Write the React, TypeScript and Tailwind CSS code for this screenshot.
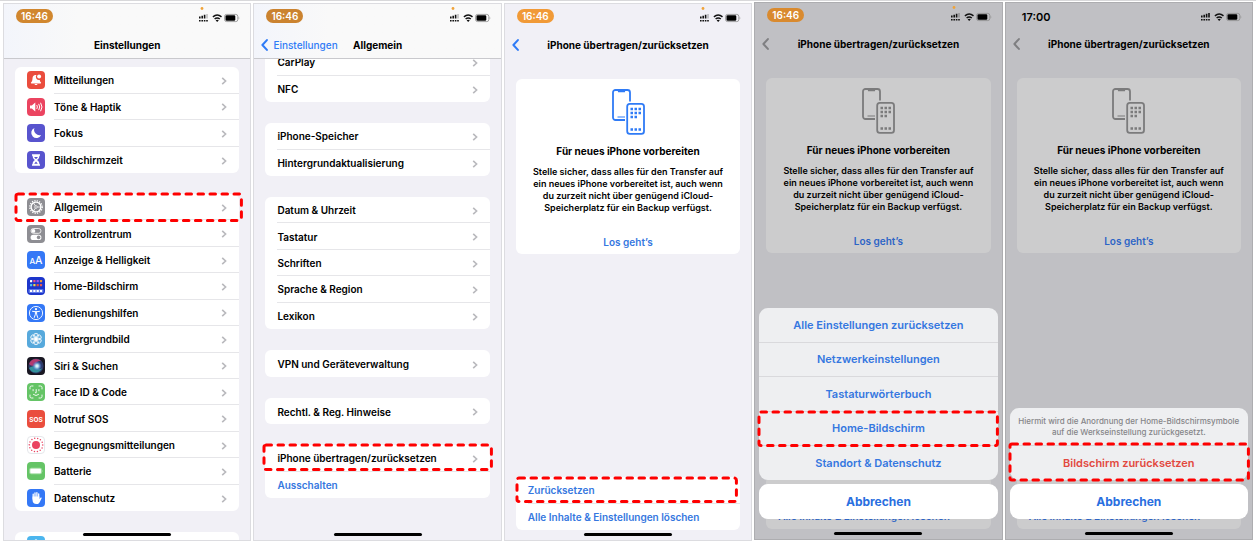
import type { FC, ReactNode } from "react";
import clsx from "clsx";

const Tile: FC<{ className: string; children?: ReactNode }> = ({
  className,
  children,
}) => (
  <svg
    viewBox="0 0 18 18"
    aria-hidden="true"
    className={clsx("size-[18px] shrink-0 rounded-[4px]", className)}
  >
    {children}
  </svg>
);

const BellIcon = () => (
  <Tile className="bg-[#ea4d3d]">
    <path
      fill="#fff"
      d="M8.6 4c-2 .1-3 1.600-3.100 3.400-.1 2-.5 3-1.500 4.200-.3.4 0 .8.4.8h9.200c.4 0 .7-.4.4-.8-.7-.8-1.100-1.500-1.300-2.600a3.200 3.200 0 0 1-3.300-4.900zM7.500 13.100h3c-.2 1.300-2.800 1.300-3 0z"
    />
    <circle cx="12.100" cy="5.600" r="2" fill="#fff" />
  </Tile>
);

const SoundIcon = () => (
  <Tile className="bg-[#eb4460]">
    <path fill="#fff" d="M3 7.400h1.800L8.300 4.600v8.800L4.800 10.600H3z" />
    <path
      stroke="#fff"
      fill="none"
      strokeLinecap="round"
      d="M10 7.400q1 1.600 0 3.200M11.900 6.200q1.900 2.800 0 5.600M13.800 5.100q2.600 3.900 0 7.800"
    />
  </Tile>
);

const MoonIcon = () => (
  <Tile className="bg-[#5854ce]">
    <path
      fill="#fff"
      d="M7.400 4a5.200 5.200 0 1 0 6.800 6.900A5.400 5.400 0 0 1 7.400 4z"
    />
  </Tile>
);

const HourglassIcon = () => (
  <Tile className="bg-[#5854ce]">
    <path
      fill="#fff"
      d="M5 3.200h8v1.600h-.6c0 2-.8 3.200-2.400 4.200 1.600 1 2.400 2.200 2.400 4.200h.6v1.600H5v-1.600h.6c0-2 .8-3.200 2.400-4.200-1.600-1-2.400-2.200-2.400-4.200H5z"
    />
    <path fill="#5854ce" d="M7 6h4L9 8.300zM9 10.500l1.800 2.300H7.200z" />
  </Tile>
);

const GearIcon = () => (
  <Tile className="bg-[#8e8e93]">
    <circle
      cx="9"
      cy="9"
      r="6.200"
      fill="none"
      stroke="#fff"
      strokeWidth="1.400"
      strokeDasharray="1.200 1.235"
    />
    <circle cx="9" cy="9" r="4.900" fill="none" stroke="#fff" strokeWidth="1.400" />
    <circle cx="9" cy="9" r="1.300" fill="none" stroke="#fff" strokeWidth=".7" />
    <path
      stroke="#fff"
      strokeWidth=".8"
      d="M10.400 9h3.400M8.300 7.800 6.500 4.800M8.300 10.200l-1.800 3"
    />
  </Tile>
);

const SwitchesIcon = () => (
  <Tile className="bg-[#8e8e93]">
    <rect
      x="4"
      y="3.500"
      width="10"
      height="4.800"
      rx="2.400"
      fill="none"
      stroke="#fff"
      strokeWidth=".8"
    />
    <circle cx="6.400" cy="5.900" r="1.900" fill="#fff" />
    <rect x="3.600" y="9.700" width="10.800" height="5.400" rx="2.700" fill="#fff" />
    <circle cx="11.600" cy="12.400" r="1.800" fill="#8e8e93" />
  </Tile>
);

const TextSizeIcon = () => (
  <Tile className="bg-[#3478f6]">
    <text x="2.500" y="12.800" fontSize="8" fontWeight="500" fill="#fff">
      A
    </text>
    <text x="8" y="12.800" fontSize="10.500" fontWeight="500" fill="#fff">
      A
    </text>
  </Tile>
);

const appColors = [
  ["#fff", "#ee4f86", "#a456e8", "#f19a37"],
  ["#4fc3f7", "#f5d33f", "#ea4d3d", "#ee5f50"],
];

const HomeScreenIcon = () => (
  <Tile className="bg-[#1d36cb]">
    {appColors.map((row, y) =>
      row.map((color, x) => (
        <rect
          key={`${x}-${y}`}
          x={3 + x * 3.300}
          y={3 + y * 4}
          width="2.200"
          height="2.200"
          rx=".5"
          fill={color}
        />
      ))
    )}
    <rect x="1.500" y="12" width="15" height="4" rx="1" fill="#5f79e8" />
    <path
      stroke="#fff"
      strokeWidth="2.200"
      strokeDasharray="2.200 1.100"
      d="M3 14h12.100"
    />
  </Tile>
);

const AccessibilityIcon = () => (
  <Tile className="bg-[#3478f6]">
    <circle cx="9" cy="9" r="6.600" fill="none" stroke="#fff" strokeWidth=".9" />
    <circle cx="9" cy="5.200" r="1.100" fill="#fff" />
    <path
      stroke="#fff"
      fill="none"
      strokeLinecap="round"
      strokeLinejoin="round"
      d="M5.500 7.300 9 7.800l3.500-.5M8.400 7.800v2.400l-1.100 3.300M9.600 7.800v2.400l1.100 3.300"
    />
  </Tile>
);

const FlowerIcon = () => (
  <Tile className="bg-[#57a9dc]">
    {[0, 60, 120, 180, 240, 300].map((angle) => (
      <circle
        key={angle}
        cx="9"
        cy="5.600"
        r="2.300"
        fill="#fff"
        fillOpacity=".15"
        stroke="#fff"
        strokeWidth=".8"
        transform={`rotate(${angle} 9 9)`}
      />
    ))}
    <circle cx="9" cy="9" r="1.500" fill="#fff" />
  </Tile>
);

const SiriIcon = () => (
  <Tile className="bg-[#191722]">
    <defs>
      <radialGradient id="siri">
        <stop offset="0" stopColor="#fff" />
        <stop offset=".4" stopColor="#9fd0e8" />
        <stop offset="1" stopColor="#3a63c8" stopOpacity=".3" />
      </radialGradient>
    </defs>
    <circle cx="9" cy="9" r="7.600" fill="#2e3b69" />
    <path fill="#d63b71" fillOpacity=".8" d="M2 7c2-6 9-6 12-3-4 0-6 2-5 5-3 0-5 0-7-2z" />
    <path fill="#36b9b0" fillOpacity=".7" d="M2 11c3-2 6-2 7-1 3 2 5 3 6 1-1 5-10 7-13 0z" />
    <circle cx="10" cy="9" r="4.500" fill="url(#siri)" />
  </Tile>
);

const FaceIcon = () => (
  <Tile className="bg-[#65c466]">
    <path
      stroke="#fff"
      strokeWidth=".9"
      fill="none"
      strokeLinecap="round"
      d="M3 6V4.500A1.500 1.500 0 0 1 4.500 3H6M12 3h1.500A1.500 1.500 0 0 1 15 4.500V6M15 12v1.500a1.500 1.500 0 0 1-1.500 1.500H12M6 15H4.500A1.500 1.500 0 0 1 3 13.500V12M6.100 6.500v1.300M11.900 6.500v1.300M9.200 6.500v3.200h-.8M6.400 11.500q2.600 2.300 5.200 0"
    />
  </Tile>
);

const SosIcon = () => (
  <Tile className="bg-[#ea4d3d]">
    <text
      x="9"
      y="11.500"
      fontSize="6.500"
      fontWeight="700"
      textAnchor="middle"
      fill="#fff"
    >
      SOS
    </text>
  </Tile>
);

const ExposureIcon = () => (
  <Tile className="border border-gray-200 bg-white">
    <circle cx="9" cy="9" r="4.500" fill="#ea4461" />
    <circle
      cx="9"
      cy="9"
      r="7.600"
      fill="none"
      stroke="#ea4461"
      strokeWidth="1.700"
      strokeLinecap="round"
      strokeDasharray="0 3.411"
    />
  </Tile>
);

const BatteryTileIcon = () => (
  <Tile className="bg-[#65c466]">
    <rect
      x="2.300"
      y="5.700"
      width="12.600"
      height="6.600"
      rx="1.800"
      fill="#a8dfa9"
    />
    <rect x="3.300" y="6.700" width="10.600" height="4.600" rx="1" fill="#fff" />
    <path fill="#a8dfa9" d="M15.400 7.800q1.200 1.200 0 2.400z" />
  </Tile>
);

const HandIcon = () => (
  <Tile className="bg-[#3478f6]">
    <path
      stroke="#fff"
      strokeWidth="1.300"
      strokeLinecap="round"
      d="M6.200 10V5.200M8 9V3.800M9.900 9V3.600M11.700 10V4.900"
    />
    <path
      fill="#fff"
      d="M5.550 7.500h6.800v2.700l1.300-1.600c.5-.5 1.300 0 1 .7l-2 3.900c-.6 1.200-1.700 1.900-3.200 1.900-2.500 0-3.900-1.500-3.900-4z"
    />
  </Tile>
);

const StoreIcon = () => (
  <Tile className="bg-[#4bb5ee]">
    <path stroke="#fff" strokeWidth="1.400" d="M9.800 3.600 5 12M8.200 3.600 13 12" />
  </Tile>
);

const Chevron = () => (
  <svg
    viewBox="0 0 6 8"
    aria-hidden="true"
    className="mr-3 ml-auto h-2 w-1.5 shrink-0"
  >
    <path
      d="M1.200.8 4.600 4 1.200 7.200"
      fill="none"
      stroke="#b9b9bd"
      strokeWidth="1.600"
    />
  </svg>
);

/* red dashed marker drawn around the step to tap */
const Marker: FC<{ className: string }> = ({ className }) => (
  <span className={clsx("pointer-events-none absolute z-10", className)}>
    <svg aria-hidden="true" className="block size-full overflow-visible">
      <rect
        width="100%"
        height="100%"
        rx="2"
        fill="none"
        stroke="#fe0000"
        strokeWidth="3"
        strokeLinecap="round"
        strokeDasharray="5.500 6.500"
      />
    </svg>
  </span>
);

const StatusIcons: FC<{ dot: boolean }> = ({ dot }) => (
  <svg viewBox="0 0 42 18" aria-hidden="true" className="h-[18px] w-[42px]">
    {dot && <circle cx="4" cy="2.500" r="1.400" fill="#f0a33a" />}
    <path
      fill="#111"
      d="M1 12.500h1.600v-1.900H1zM3.400 12.500H5V9.800H3.400zM5.800 12.500h1.600V8.800H5.800zM1 15.600h1.600v-1.700H1zM3.400 15.600H5v-1.700H3.400zM5.800 15.600h1.600v-1.700H5.800zM8.200 15.600h1.600v-1.700H8.200z"
    />
    <path
      fill="#111"
      fillOpacity={dot ? ".25" : "1"}
      d="M8.200 12.500h1.600V8H8.200z"
    />
    <path
      fill="none"
      stroke="#111"
      strokeWidth="1.500"
      d="M14.900 10.800q4.300-3.600 8.600 0M16.600 13q2.600-2.100 5.200 0"
    />
    <path fill="#111" d="M17.600 14.300q1.600-1.200 3.200 0L19.200 16z" />
    <rect
      x="26.600"
      y="8.400"
      width="13.200"
      height="7.200"
      rx="2"
      fill="none"
      stroke="#8a8a8a"
      strokeWidth=".8"
    />
    <rect x="27.500" y="9.300" width="9.800" height="5.400" rx="1.200" fill="#000" />
    <path fill="#8a8a8a" d="M40.700 10.600q1.300 1.400 0 2.800z" />
  </svg>
);

interface PhoneProps {
  time?: string;
  pill?: string;
  title: string;
  back?: string;
  dim?: boolean;
  bar?: boolean;
  children: ReactNode;
}

const Phone: FC<PhoneProps> = ({
  time = "16:46",
  pill,
  title,
  back,
  dim,
  bar,
  children,
}) => (
  <section
    className={clsx(
      "relative flex min-w-0 flex-1 flex-col overflow-hidden border",
      dim
        ? "mb-px border-[#adadb0] bg-[#c0c0c4]"
        : "mt-px border-[#dcdce0] bg-[#f1f0f6]"
    )}
  >
    <header
      className={clsx(
        "relative z-10 shrink-0 border-b",
        bar
          ? "border-[#c9c9cd] bg-linear-to-r from-[#f3f5fb] to-[#f9f9f9] to-30%"
          : "border-transparent"
      )}
    >
      <div className="flex h-[27px] items-start justify-between pr-2.5 pl-3">
        <span
          className={clsx(
            "flex w-[37px] items-center justify-center",
            pill
              ? clsx(
                  pill,
                  "mt-[5px] h-[14px] rounded-full text-[10px] font-semibold text-white"
                )
              : "mt-[7px] h-[14px] text-[11px] font-semibold text-black"
          )}
        >
          {time}
        </span>
        <span className="mt-0.5">
          <StatusIcons dot={!!pill} />
        </span>
      </div>
      <nav className="grid h-[27px] grid-cols-[1fr_auto_1fr] items-center pt-px">
        <span>
          {back !== undefined && (
            <button
              aria-label={back || "Zurück"}
              className={clsx(
                "flex items-center gap-[5px] pl-[7px] text-[10px] font-medium",
                dim ? "text-[#7f7f82]" : "text-[#2f7bf6]"
              )}
            >
              <svg
                viewBox="0 0 7 12"
                aria-hidden="true"
                className="h-3 w-[7px]"
              >
                <path
                  d="M5.900 1.100 1.400 6l4.500 4.900"
                  fill="none"
                  stroke="currentColor"
                  strokeWidth="2"
                  strokeLinecap="round"
                  strokeLinejoin="round"
                />
              </svg>
              {back}
            </button>
          )}
        </span>
        <h2 className="text-[10px] font-bold text-black">{title}</h2>
      </nav>
    </header>
    {children}
    <div className="absolute inset-x-0 bottom-1 z-30 mx-auto h-[3px] w-[88px] rounded-full bg-black" />
  </section>
);

interface Item {
  label: string;
  icon?: ReactNode;
  link?: boolean;
  marker?: string;
}

const Group: FC<{ items: Item[]; className: string; dim?: boolean }> = ({
  items,
  className,
  dim,
}) => (
  <ul
    className={clsx(
      "flex shrink-0 flex-col rounded-md",
      dim ? "bg-[#cccccd]" : "bg-white",
      className
    )}
  >
    {items.map(({ label, icon, link, marker }, i) => (
      <li key={label} className="relative flex min-h-0 flex-1 pl-3">
        <button className="flex min-w-0 flex-1 items-center gap-[9px] text-left">
          {icon}
          <span
            className={clsx(
              "flex min-w-0 flex-1 items-center self-stretch pt-0.5 whitespace-nowrap text-[10px] font-semibold",
              i < items.length - 1 && "border-b",
              dim ? "border-[#bbb]" : "border-[#e6e6e9]",
              link ? (dim ? "text-[#2c64c6]" : "text-[#3577e0]") : "text-black"
            )}
          >
            {label}
            {!link && <Chevron />}
          </span>
        </button>
        {marker && <Marker className={marker} />}
      </li>
    ))}
  </ul>
);

const PrepareCard: FC<{ dim?: boolean }> = ({ dim }) => (
  <article
    className={clsx(
      "mx-[11px] mt-5 flex h-[175px] shrink-0 flex-col items-center rounded-md pt-2.5",
      dim ? "bg-[#cccccd]" : "bg-white"
    )}
  >
    <svg
      viewBox="0 0 33 46"
      aria-hidden="true"
      className={clsx(
        "h-[46px] w-[33px]",
        dim ? "text-[#7b7b7c]" : "text-[#2f7bf6]"
      )}
    >
      <path
        fill="none"
        stroke="currentColor"
        strokeWidth="1.800"
        d="M18 12.500V3.500A2.500 2.500 0 0 0 15.500 1H3.500A2.500 2.500 0 0 0 1 3.500v25A2.500 2.500 0 0 0 3.500 31H13"
      />
      <path fill="currentColor" d="M5.500 1h8l-.6 2.300H6.100zM5.500 27.500H13v1H5.500z" />
      <rect
        x="15.200"
        y="14.800"
        width="16.800"
        height="30"
        rx="2.600"
        fill="none"
        stroke="currentColor"
        strokeWidth="1.800"
      />
      <path
        stroke="currentColor"
        strokeWidth="2.400"
        strokeDasharray="2.500 1.500"
        d="M18.500 20h10.500M18.500 24h10.500M18.500 28h6.500M18.500 40.500h10.500"
      />
    </svg>
    <h3 className="mt-2 text-[10px] leading-4 font-bold text-black">
      Für neues iPhone vorbereiten
    </h3>
    <p className="mt-[7px] text-center text-[9px] leading-3 font-semibold whitespace-nowrap text-black">
      Stelle sicher, dass alles für den Transfer auf
      <br />
      ein neues iPhone vorbereitet ist, auch wenn
      <br />
      du zurzeit nicht über genügend iCloud-
      <br />
      Speicherplatz für ein Backup verfügst.
    </p>
    <button
      className={clsx(
        "mt-5 text-[10px] leading-4 font-semibold",
        dim ? "text-[#2c64c6]" : "text-[#3577e0]"
      )}
    >
      Los geht’s
    </button>
  </article>
);

const Sheet: FC<{ children: ReactNode }> = ({ children }) => (
  <div className="absolute inset-x-1 bottom-5 z-20 flex flex-col gap-1">
    {children}
    <button className="h-[35px] rounded-[9px] bg-white text-[12px] font-bold text-[#2a6fe0]">
      Abbrechen
    </button>
  </div>
);

const notifications: Item[] = [
  { label: "Mitteilungen", icon: <BellIcon /> },
  { label: "Töne & Haptik", icon: <SoundIcon /> },
  { label: "Fokus", icon: <MoonIcon /> },
  { label: "Bildschirmzeit", icon: <HourglassIcon /> },
];

const general: Item[] = [
  {
    label: "Allgemein",
    icon: <GearIcon />,
    marker: "inset-y-0 -right-0.5 left-px",
  },
  { label: "Kontrollzentrum", icon: <SwitchesIcon /> },
  { label: "Anzeige & Helligkeit", icon: <TextSizeIcon /> },
  { label: "Home-Bildschirm", icon: <HomeScreenIcon /> },
  { label: "Bedienungshilfen", icon: <AccessibilityIcon /> },
  { label: "Hintergrundbild", icon: <FlowerIcon /> },
  { label: "Siri & Suchen", icon: <SiriIcon /> },
  { label: "Face ID & Code", icon: <FaceIcon /> },
  { label: "Notruf SOS", icon: <SosIcon /> },
  { label: "Begegnungsmitteilungen", icon: <ExposureIcon /> },
  { label: "Batterie", icon: <BatteryTileIcon /> },
  { label: "Datenschutz", icon: <HandIcon /> },
];

const resetItems = (marker?: string): Item[] => [
  { label: "Zurücksetzen", link: true, marker },
  { label: "Alle Inhalte & Einstellungen löschen", link: true },
];

const resetOptions: string[] = [
  "Alle Einstellungen zurücksetzen",
  "Netzwerkeinstellungen",
  "Tastaturwörterbuch",
  "Home-Bildschirm",
  "Standort & Datenschutz",
];

const App: FC = () => {
  return (
    <main className="flex h-screen gap-0.5 overflow-hidden border-t border-[#d8d8da] bg-white px-[3px] pt-px pb-0.5 font-['Inter','Liberation_Sans',sans-serif]">
      <Phone title="Einstellungen" pill="bg-[#d1872f]" bar>
        <div className="flex flex-col gap-[21px] px-[11px] pt-2">
          <Group items={notifications} className="h-[106px]" />
          <Group items={general} className="h-[317px]" />
          <div className="rounded-t-md bg-white pt-1 pb-1 pl-3">
            <StoreIcon />
          </div>
        </div>
      </Phone>

      <Phone title="Allgemein" back="Einstellungen" pill="bg-[#cb8330]" bar>
        <div className="-mt-2.5 flex flex-col gap-[21px] px-[11px]">
          <Group
            items={[{ label: "CarPlay" }, { label: "NFC" }]}
            className="h-[53px]"
          />
          <Group
            items={[
              { label: "iPhone-Speicher" },
              { label: "Hintergrundaktualisierung" },
            ]}
            className="h-[53px]"
          />
          <Group
            items={[
              { label: "Datum & Uhrzeit" },
              { label: "Tastatur" },
              { label: "Schriften" },
              { label: "Sprache & Region" },
              { label: "Lexikon" },
            ]}
            className="h-[132px]"
          />
          <Group
            items={[{ label: "VPN und Geräteverwaltung" }]}
            className="h-[27px]"
          />
          <Group
            items={[{ label: "Rechtl. & Reg. Hinweise" }]}
            className="h-[26px]"
          />
          <Group
            items={[
              {
                label: "iPhone übertragen/zurücksetzen",
                marker: "top-0 bottom-0.5 -left-px -right-0.5",
              },
              { label: "Ausschalten", link: true },
            ]}
            className="h-[53px]"
          />
        </div>
      </Phone>

      <Phone title="iPhone übertragen/zurücksetzen" back="" pill="bg-[#f19a37]">
        <PrepareCard />
        <Group
          items={resetItems("top-px bottom-0.5 left-px right-1")}
          className="mx-[11px] mt-auto mb-2.5 h-[53px]"
        />
      </Phone>

      <Phone
        title="iPhone übertragen/zurücksetzen"
        back=""
        pill="bg-[#d98a2f]"
        dim
      >
        <PrepareCard dim />
        <Group
          items={resetItems()}
          className="mx-[11px] mt-auto mb-2.5 h-[53px]"
          dim
        />
        <Sheet>
          <ul className="flex h-[172px] flex-col divide-y divide-[#d9d9dc] rounded-[9px] bg-[#eeeff1]">
            {resetOptions.map((option) => (
              <li key={option} className="relative flex flex-1">
                <button className="flex-1 text-[11px] font-semibold text-[#3577e0]">
                  {option}
                </button>
                {option === "Home-Bildschirm" && (
                  <Marker className="inset-x-0 inset-y-0" />
                )}
              </li>
            ))}
          </ul>
        </Sheet>
      </Phone>

      <Phone
        title="iPhone übertragen/zurücksetzen"
        back=""
        time="17:00"
        dim
      >
        <PrepareCard dim />
        <Group
          items={resetItems()}
          className="mx-[11px] mt-auto mb-2.5 h-[53px]"
          dim
        />
        <Sheet>
          <div className="flex flex-col rounded-[9px] bg-[#eeeff1]">
            <p className="pt-2 pb-[7px] text-center text-[8px] leading-[11px] font-medium whitespace-nowrap text-[#858588]">
              Hiermit wird die Anordnung der Home-Bildschirmsymbole
              <br />
              auf die Werkseinstellung zurückgesetzt.
            </p>
            <div className="relative flex h-[35px] border-t border-[#d9d9dc]">
              <button className="flex-1 text-[11px] font-semibold text-[#e2493f]">
                Bildschirm zurücksetzen
              </button>
              <Marker className="inset-x-0 -top-0.5 bottom-0" />
            </div>
          </div>
        </Sheet>
      </Phone>
    </main>
  );
};

export default App;
